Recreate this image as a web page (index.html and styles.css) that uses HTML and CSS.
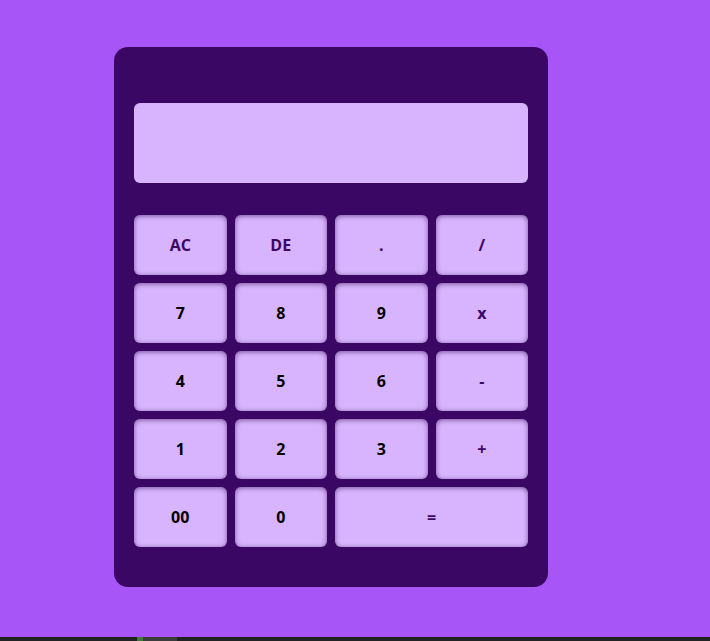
FILE: index.html
```html
<!DOCTYPE html>
<html>
<head>
<meta charset="utf-8">
<link rel="stylesheet" href="styles.css">
</head>
<body>
<main class="page">
  <div class="calculator">
    <div class="display"></div>
    <div class="keys">
      <button class="key op">AC</button>
      <button class="key op">DE</button>
      <button class="key op">.</button>
      <button class="key op">/</button>
      <button class="key">7</button>
      <button class="key">8</button>
      <button class="key">9</button>
      <button class="key op">x</button>
      <button class="key">4</button>
      <button class="key">5</button>
      <button class="key">6</button>
      <button class="key op">-</button>
      <button class="key">1</button>
      <button class="key">2</button>
      <button class="key">3</button>
      <button class="key op">+</button>
      <button class="key">00</button>
      <button class="key">0</button>
      <button class="key op wide">=</button>
    </div>
  </div>
</main>
<div class="taskbar">
  <span class="tb-green"></span><span class="tb-grey"></span>
</div>
</body>
</html>
```
FILE: styles.css
```css
html, body {
  margin: 0;
  padding: 0;
}
body {
  background: #a855f7;
  height: 641px;
  display: flex;
  flex-direction: column;
  font-family: "Open Sans", "Noto Sans", sans-serif;
  overflow: hidden;
}
.page {
  flex: 1;
  padding: 47px 0 0 114px;
}
.calculator {
  width: 394px;
  padding: 56px 20px 40px;
  background: #3b0764;
  border-radius: 14px;
}
.display {
  height: 80px;
  background: #d8b4fe;
  border-radius: 6px;
  margin-bottom: 32px;
}
.keys {
  display: grid;
  grid-template-columns: repeat(4, 1fr);
  grid-auto-rows: 60px;
  gap: 8px;
}
.key {
  border: none;
  background: #d8b4fe;
  border-radius: 6px;
  font-family: "Open Sans", "Noto Sans", sans-serif;
  font-weight: 700;
  font-size: 16px;
  color: #000;
  box-shadow: inset 0 1px 5px rgba(40, 0, 70, 0.55);
  padding: 0;
}
.key.op {
  color: #3b0764;
}
.key.wide {
  grid-column: span 2;
}
.taskbar {
  height: 4px;
  background: #222222;
  display: flex;
  padding-left: 137px;
}
.tb-green {
  width: 6px;
  background: #3f7a3a;
}
.tb-grey {
  width: 34px;
  background: #3c3c3c;
}
```
